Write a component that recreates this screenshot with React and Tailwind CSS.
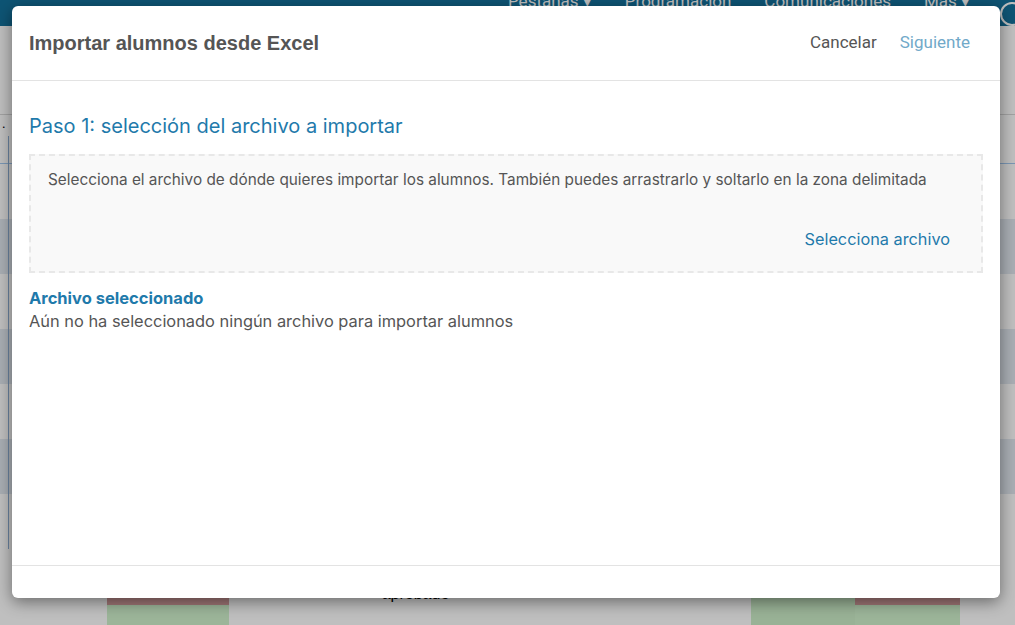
import React from "react";

const rows = [0, 1, 2, 3, 4, 5, 6];
const cols = [8, 107, 229, 311, 520, 630, 751, 855, 960];

const App = () => {
  return (
    <div className="relative w-[1015px] h-[625px] overflow-hidden bg-white font-['Inter','Noto_Sans',sans-serif]">
      {/* Background page */}
      <div className="h-[26px] bg-[#13709b] flex items-start overflow-hidden pl-[508px]">
        <div className="flex gap-[33px] -mt-[11px] text-white text-[17px] font-['Roboto',sans-serif] whitespace-nowrap">
          <span>Pestañas ▾</span>
          <span>Programación</span>
          <span>Comunicaciones</span>
          <span>Más ▾</span>
        </div>
        <span className="ml-[30px] mt-[2px] w-[24px] h-[24px] rounded-full border-2 border-white shrink-0"></span>
      </div>
      <div className="h-[89px] border-b border-[#d8d8d8]"></div>
      <div className="h-[21px] pl-[2px] text-[12px] leading-[18px] text-black">.</div>
      <div className="relative">
        <div className="h-[28px] border-b border-[#a3c8f0]"></div>
        {rows.map((r) => (
          <div
            key={r}
            className={r % 2 === 0 ? "h-[55px] bg-white" : "h-[55px] bg-[#e2e9f1]"}
          ></div>
        ))}
        {cols.map((x) => (
          <div
            key={x}
            className="absolute top-0 bottom-0 border-l border-[#8fb0d6]"
            style={{ left: x }}
          ></div>
        ))}
      </div>
      <div className="absolute left-0 right-0 top-[598px] h-[27px] flex">
        <div className="w-[107px]"></div>
        <div className="w-[122px] bg-[#d0f2cc] border-t-[7px] border-[#d49e9e]"></div>
        <div className="w-[82px]"></div>
        <div className="w-[209px] flex justify-center">
          <span className="-mt-[16px] text-[16px] text-black font-['Liberation_Sans',sans-serif]">aprobado</span>
        </div>
        <div className="w-[231px]"></div>
        <div className="w-[104px] bg-[#cdeec9]"></div>
        <div className="w-[105px] bg-[#d0f2cc] border-t-[7px] border-[#d49e9e]"></div>
      </div>

      {/* Backdrop */}
      <div className="absolute inset-0 bg-black/25"></div>

      {/* Modal */}
      <div className="absolute left-[12px] top-[6px] w-[988px] h-[592px] bg-white rounded-[6px] shadow-[0_4px_16px_rgba(0,0,0,0.45)] flex flex-col">
        <div className="h-[75px] border-b border-[#e3e3e3] flex items-center justify-between pl-[17px] pr-[30px] shrink-0">
          <h2 className="text-[20px] font-bold text-[#555555] font-['Liberation_Sans',sans-serif]">
            Importar alumnos desde Excel
          </h2>
          <div className="flex gap-[23px] text-[17px] font-['Roboto',sans-serif]">
            <button className="text-[#555555]">Cancelar</button>
            <button className="text-[#71a9c9]">Siguiente</button>
          </div>
        </div>

        <div className="flex-1 px-[17px] pt-[33px]">
          <h3 className="text-[20px] leading-[24px] text-[#1f7aab]">
            Paso 1: selección del archivo a importar
          </h3>
          <div className="mt-[16px] h-[119px] border-2 border-dashed border-[#e8e8e8] bg-[#f9f9f9] pl-[17px] pr-[31px] pt-[13px] flex flex-col">
            <p className="text-[15.35px] leading-[22px] text-[#555555] whitespace-nowrap">
              Selecciona el archivo de dónde quieres importar los alumnos. También puedes arrastrarlo y soltarlo en la zona delimitada
            </p>
            <div className="mt-[36px] flex justify-end">
              <button className="text-[16.3px] leading-[24px] text-[#1f7aab]">Selecciona archivo</button>
            </div>
          </div>
          <p className="mt-[14px] text-[16.5px] leading-[22px] font-bold text-[#1f7aab]">Archivo seleccionado</p>
          <p className="text-[16.4px] leading-[24px] text-[#555555]">
            Aún no ha seleccionado ningún archivo para importar alumnos
          </p>
        </div>

        <div className="h-[33px] border-t border-[#e3e3e3] shrink-0"></div>
      </div>
    </div>
  );
};

export default App;
